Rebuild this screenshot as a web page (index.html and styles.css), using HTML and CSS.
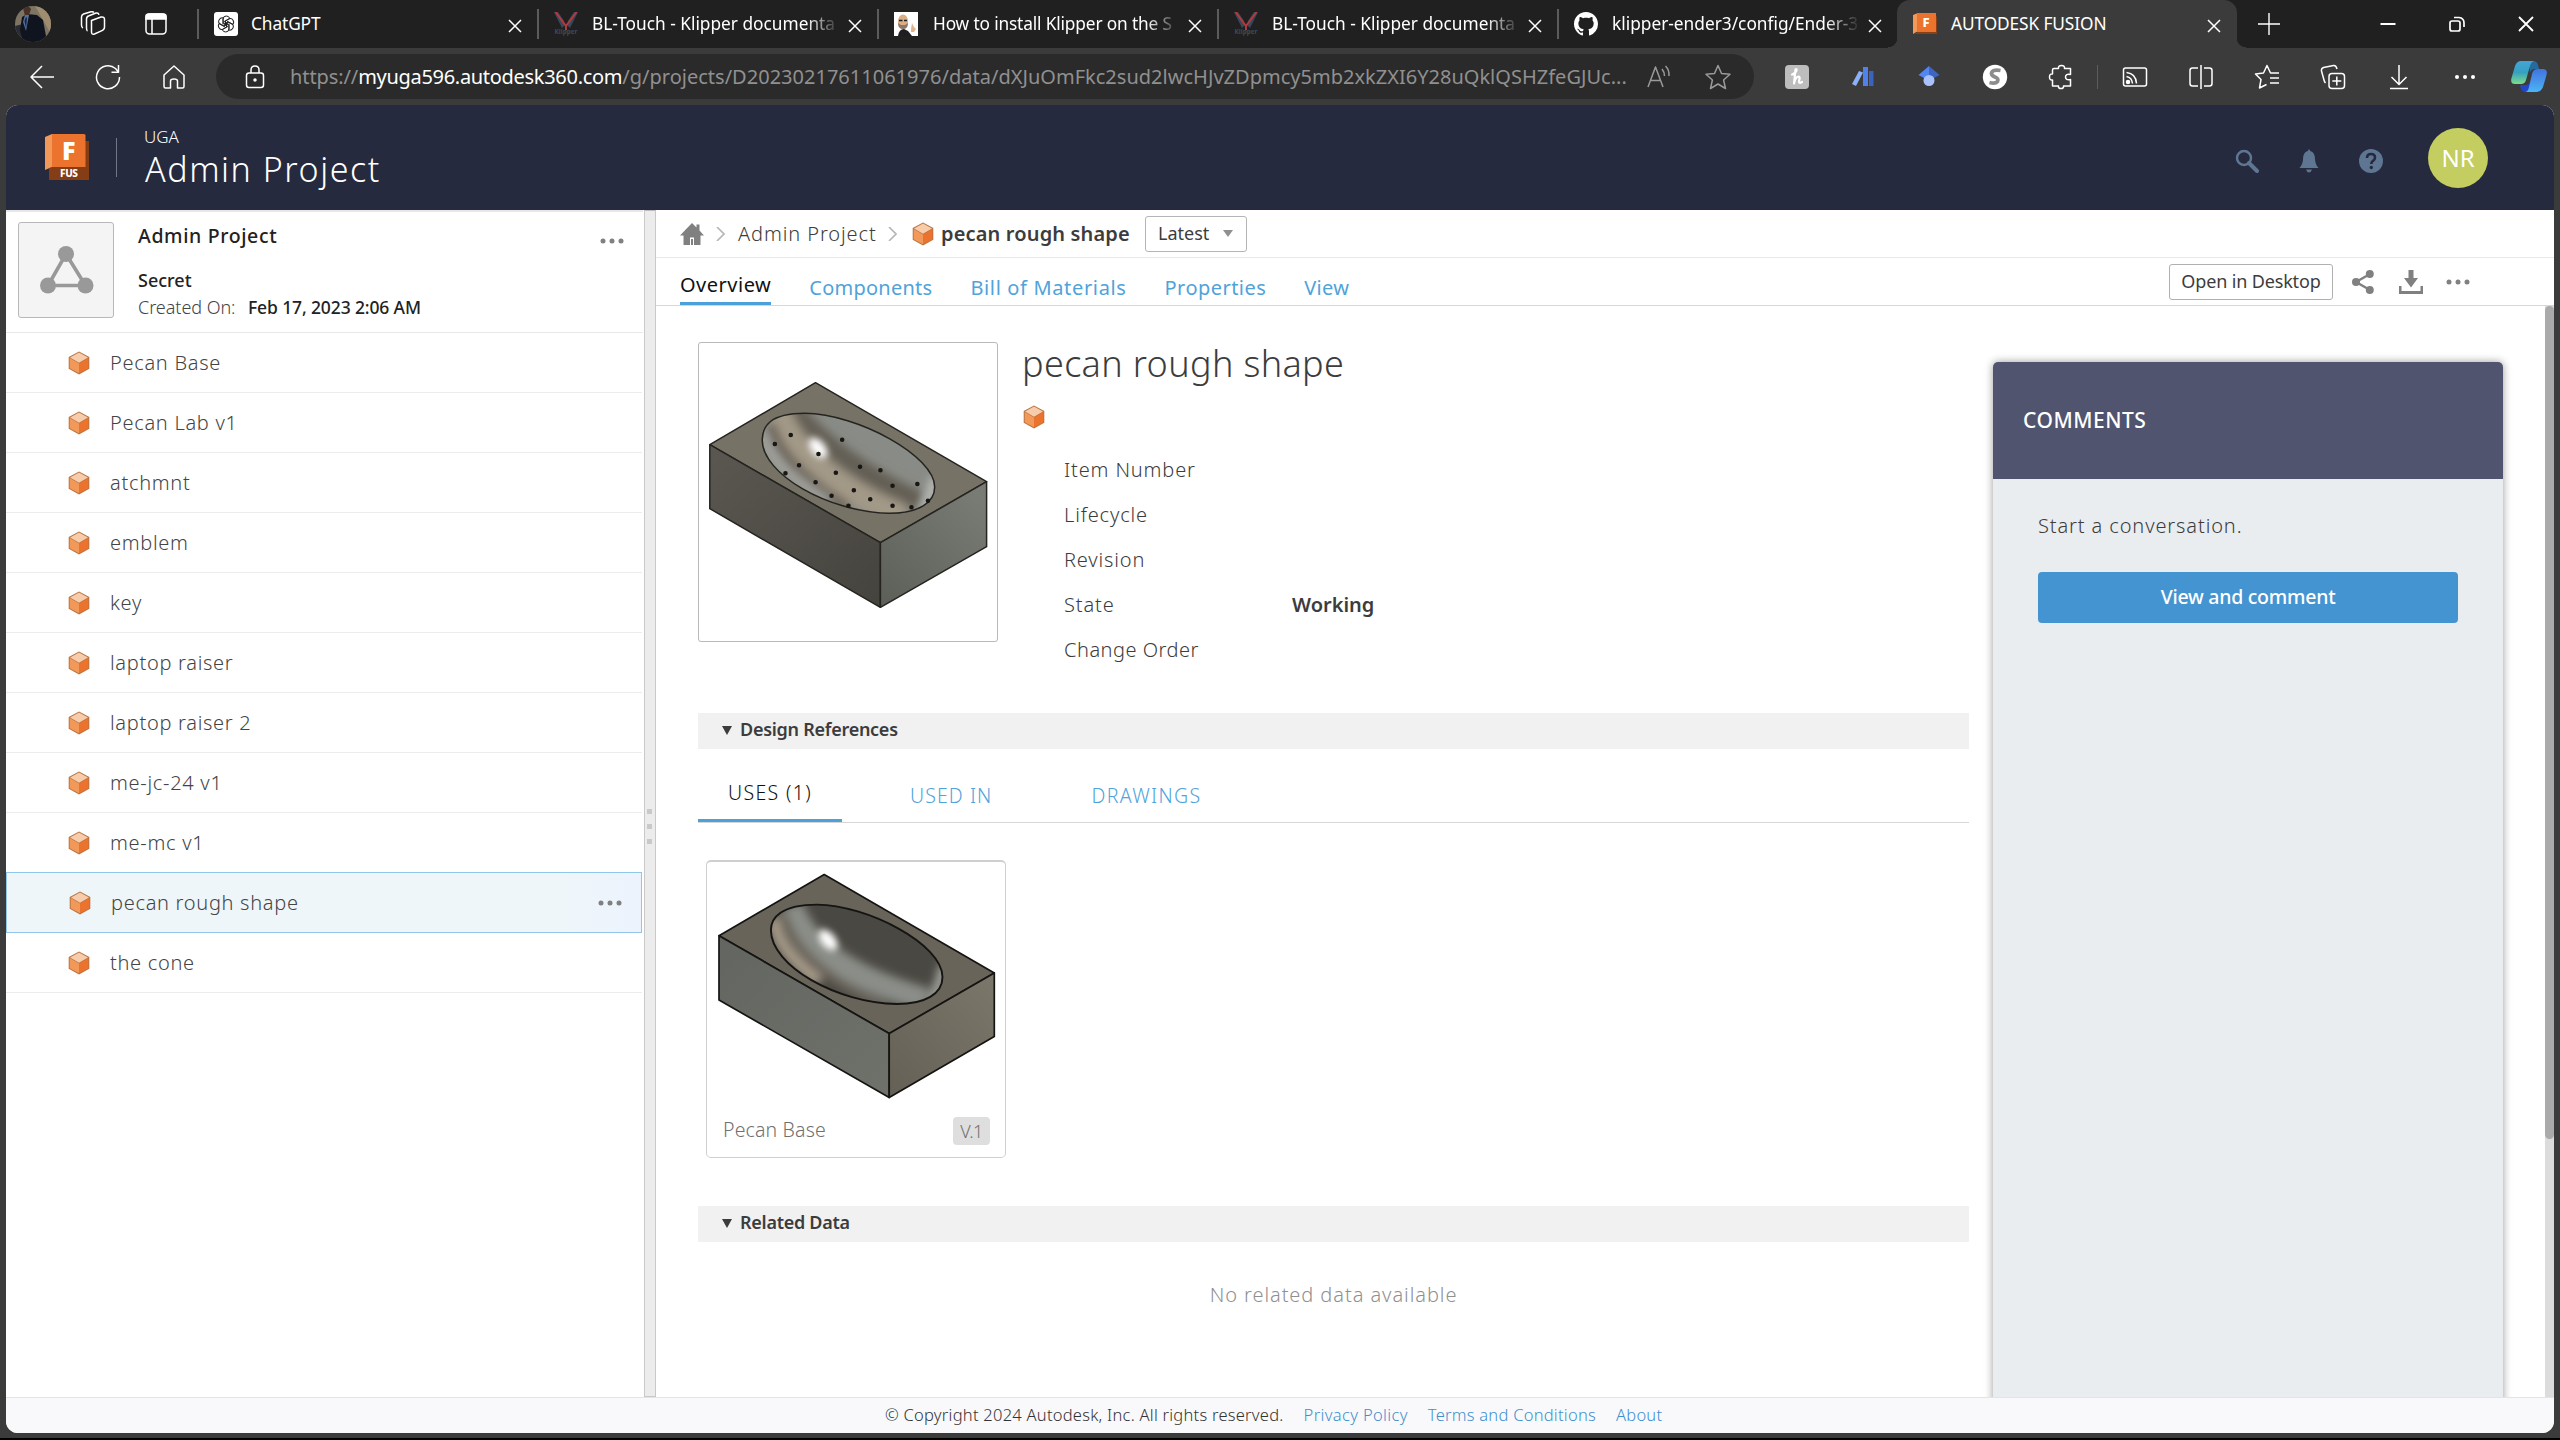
FILE: index.html
```html
<!DOCTYPE html>
<html lang="en">
<head>
<meta charset="utf-8">
<title>AUTODESK FUSION</title>
<link rel="stylesheet" href="styles.css">
</head>
<body>
<svg class="defs" aria-hidden="true">
  <symbol id="cube" viewBox="0 0 22 24">
    <path d="M11 .5 21.3 6v11.8L11 23.5.7 17.800V6z" fill="#b87442"/>
    <path d="M11 1.600 20 6.400 11 11.800 2 6.400z" fill="#f8cbaa"/>
    <path d="M1.700 7 11 12.500V22.300L1.700 17.200z" fill="#f2995a"/>
    <path d="M20.400 7 11 12.500V22.300L20.400 17.200z" fill="#ec732d"/>
  </symbol>
  <symbol id="close" viewBox="0 0 14 14"><path d="M1 1 13 13M13 1 1 13" stroke="currentColor" stroke-width="1.500" fill="none"/></symbol>
  <symbol id="dots" viewBox="0 0 24 6"><circle cx="3" cy="3" r="2.500"/><circle cx="12" cy="3" r="2.500"/><circle cx="21" cy="3" r="2.500"/></symbol>
  <symbol id="klipper" viewBox="0 0 24 24">
    <path d="M0 0H4L10 9V14L8 16z" fill="#34495e"/><path d="M24 0H20L14 9V14L16 16z" fill="#34495e"/>
    <path d="M1.500 0 12 14 22.500 0M12 13V18" stroke="#b5383a" stroke-width="2" fill="none"/>
    <text x="0.500" y="22" font-size="7" font-weight="700" fill="#3a4a60" textLength="23" lengthAdjust="spacingAndGlyphs">Klipper</text>
  </symbol>
</svg>

<div class="browser">
  <div class="tabstrip">
    <svg class="avatar" viewBox="0 0 36 36"><defs><clipPath id="av"><circle cx="18" cy="18" r="18"/></clipPath></defs><g clip-path="url(#av)"><path d="M0 0H36V36H0z" fill="#7e7464"/><path d="M20 0 36 4V28L28 14z" fill="#a08d70"/><path d="M0 20 8 18V36H0z" fill="#2a2c33"/><path d="M7 11 12 8 22 9 28 14 31 30 29 36H8L5 24z" fill="#10141f"/><path d="M8 2Q13-2 16 3L14 9 10 10z" fill="#493128"/><path d="M10 9 14 9 11 25 8 16z" fill="#54709c"/><path d="M11 11 12 12 11 22 9.500 15z" fill="#17244a"/></g></svg>
    <svg class="strip-icon workspaces" viewBox="0 0 26 26" fill="none" stroke="#fff" stroke-width="1.500"><path d="M11.500 9.500 21 6Q24.500 5.500 24.500 8.500V16Q24.500 18.500 22 19.600L14.500 23Q11.500 24 11.500 21z"/><path d="M7.500 20Q6.500 19.500 6.500 17V8Q6.500 5.500 9 4.800L16 2Q18.500 1.500 19 3.800"/><path d="M3 17Q1.500 16.500 1.500 14V6Q1.500 3.800 3.500 3L11 .8Q13 .5 14 1.500"/></svg>
    <svg class="strip-icon" viewBox="0 0 26 26" fill="none" stroke="#fff" stroke-width="1.500"><rect x="3" y="3" width="20" height="20" rx="3.500"/><path d="M3 8V5Q3 3 6 3H20Q23 3 23 5V8z" fill="#fff"/><path d="M9 8V23"/></svg>
    <div class="tabs">
      <div class="tab">
        <svg viewBox="0 0 24 24"><rect width="24" height="24" rx="3" fill="#fff"/><g fill="none" stroke="#222" stroke-width="1"><path id="petal" d="M9 12.500V7.500Q9 4 12.200 4 15 4 15.800 6.400L11.500 9V13.800"/><use href="#petal" transform="rotate(60 12 12)"/><use href="#petal" transform="rotate(120 12 12)"/><use href="#petal" transform="rotate(180 12 12)"/><use href="#petal" transform="rotate(240 12 12)"/><use href="#petal" transform="rotate(300 12 12)"/></g></svg>
        <span class="tab-title">ChatGPT</span><svg class="tab-close"><use href="#close"/></svg>
      </div>
      <div class="tab"><svg><use href="#klipper"/></svg><span class="tab-title faded">BL-Touch - Klipper documenta</span><svg class="tab-close"><use href="#close"/></svg></div>
      <div class="tab">
        <svg viewBox="0 0 24 24"><path d="M0 0H24V24H0z" fill="#fff"/><path d="M4 24Q5 17 10 17L14 19 18 24z" fill="#1d1d22"/><ellipse cx="9" cy="9.500" rx="5" ry="7" fill="#dcae85"/><path d="M4 11Q4 17 9 17 14 17 14 11L11 13H7z" fill="#8b7868"/><path d="M5 8.500H8.500M10 8.500H13" stroke="#222" stroke-width="1.500"/><path d="M17 17 18 11 20 15 22 17 20 20 17 20z" fill="#e2b48d"/></svg>
        <span class="tab-title faded">How to install Klipper on the S</span><svg class="tab-close"><use href="#close"/></svg>
      </div>
      <div class="tab"><svg><use href="#klipper"/></svg><span class="tab-title faded">BL-Touch - Klipper documenta</span><svg class="tab-close"><use href="#close"/></svg></div>
      <div class="tab">
        <svg viewBox="0 0 16 16" fill="#fff"><path d="M8 0C3.580 0 0 3.580 0 8c0 3.540 2.290 6.530 5.470 7.590.4.070.55-.17.55-.38 0-.19-.01-.82-.01-1.490-2.010.37-2.530-.49-2.690-.94-.09-.23-.48-.94-.82-1.130-.28-.15-.68-.52-.01-.53.63-.01 1.080.58 1.230.82.72 1.210 1.870.87 2.330.66.070-.52.28-.87.51-1.070-1.780-.2-3.640-.89-3.640-3.950 0-.87.31-1.590.82-2.150-.08-.2-.36-1.020.08-2.120 0 0 .67-.21 2.200.82.64-.18 1.320-.27 2-.27s1.360.09 2 .27c1.530-1.040 2.200-.82 2.200-.82.44 1.100.16 1.920.08 2.120.51.56.82 1.270.82 2.150 0 3.070-1.870 3.750-3.650 3.950.29.25.54.73.54 1.480 0 1.070-.01 1.930-.01 2.200 0 .21.15.46.55.38A8.010 8.010 0 0 0 16 8c0-4.420-3.580-8-8-8z"/></svg>
        <span class="tab-title faded">klipper-ender3/config/Ender-3</span><svg class="tab-close"><use href="#close"/></svg>
      </div>
      <div class="tab active">
        <svg viewBox="0 0 24 24"><path d="M2 22H24V4z" fill="#8a4017"/><path d="M0 3 5 1V19L0 22z" fill="#f2995a"/><path d="M4 1H23V20H4z" fill="#ec732d"/><text x="9.500" y="15" font-size="13" font-weight="800" fill="#fff">F</text></svg>
        <span class="tab-title">AUTODESK FUSION</span><svg class="tab-close"><use href="#close"/></svg>
      </div>
    </div>
    <svg class="new-tab" viewBox="0 0 22 22"><path d="M11 0V22M0 11H22" stroke="#fff" stroke-width="1.400"/></svg>
    <div class="window-controls">
      <svg viewBox="0 0 16 16"><path d="M.5 8H15.500" stroke="#fff" stroke-width="2"/></svg>
      <svg viewBox="0 0 16 16" fill="none" stroke="#fff" stroke-width="1.700"><rect x="1" y="5" width="10" height="10" rx="2"/><path d="M5 1.500H10Q15 2 15 7V11"/></svg>
      <svg viewBox="0 0 16 16"><path d="M1 1 15 15M15 1 1 15" stroke="#fff" stroke-width="1.800"/></svg>
    </div>
  </div>

  <div class="toolbar">
    <div class="tool"><svg viewBox="0 0 26 26"><path d="M25 13H2M13 2 2 13 13 24"/></svg></div>
    <div class="tool"><svg viewBox="0 0 26 26"><path d="M24.500 13A11.500 11.500 0 1 1 20.500 4.500L23.500 8M23.500 1V8.200H16.500"/></svg></div>
    <div class="tool"><svg viewBox="0 0 26 26"><path d="M3 11 13 2 23 11V22.500Q23 24 21.500 24H16.500V17Q16.500 15 13 15 9.500 15 9.500 17V24H4.500Q3 24 3 22.500z"/></svg></div>
    <div class="address">
      <svg viewBox="0 0 26 26"><rect x="4.500" y="9" width="17" height="14.500" rx="2.500"/><path d="M9 9V6Q9 2 13 2 17 2 17 6V9"/><circle cx="13" cy="16" r="1" fill="#fff"/></svg>
      <span class="url"><span>https://</span><b>myuga596.autodesk360.com</b><span>/g/projects/D20230217611061976/data/dXJuOmFkc2sud2lwcHJvZDpmcy5mb2xkZXI6Y28uQklQSHZfeGJUc...</span></span>
      <svg class="dim read" viewBox="0 0 26 26"><path d="M2 23 9.500 3 17 23M4.500 16.500H14.500M16 5Q18.500 8 18.500 12M19.500 2Q23.500 6 23 12"/></svg>
      <svg class="dim" viewBox="0 0 26 26"><path d="M13 1.500 16.500 9.500 25 10.300 18.600 16 20.500 24.500 13 20 5.500 24.500 7.400 16 1 10.300 9.500 9.500z"/></svg>
    </div>
    <div class="tool first"><svg class="solid" viewBox="0 0 26 26"><rect x="1" y="1" width="24" height="24" rx="4" fill="#bdbdbd"/><path d="M8 10.500Q11 10 12.500 6.500 13 4.500 11.500 5.500L10 19.500Q11.500 13 14.500 12.500 16.500 12.500 15 17 14.500 20 18 18" stroke="#fff" stroke-width="2.200" fill="none" stroke-linecap="round"/></svg></div>
    <div class="tool"><svg class="solid" viewBox="0 0 26 26"><path d="M2 20 9 7 13 8.500 6 22z" fill="#8db1f8"/><path d="M13 3H18V22H13z" fill="#4f82ea"/><path d="M19 7H23.500V22H19z" fill="#3a63c0"/></svg></div>
    <div class="tool"><svg class="solid" viewBox="0 0 26 26"><path d="M13 2 2.500 11 8 14H13z" fill="#5286f0"/><path d="M13 2 23.500 11 18 14H13z" fill="#3d66c4"/><circle cx="13" cy="16.500" r="5.500" fill="#a9c2fb"/></svg></div>
    <div class="tool"><svg class="solid" viewBox="0 0 26 26"><circle cx="13" cy="13" r="12.200" fill="#fff"/><path d="M18.500 6.500Q10 5 9.500 9.500 9.500 11.500 13 13 17 14.500 15.500 17.500 13.500 20 7.500 18.500" fill="none" stroke="#8c8c8c" stroke-width="3.800"/></svg></div>
    <div class="tool"><svg viewBox="0 0 26 26"><path d="M6 4.500H10.500Q10 1.500 13.500 1.500 17 1.500 16.500 4.500H22.500V10.500Q17.500 9.500 17.500 13 17.500 16.500 22.500 15.500V22H15.500Q16 24.500 13 24.500 10 24.500 10.500 22H4.500V16Q1.500 16.500 1.500 13 1.500 9.500 4.500 10V6Q4.500 4.500 6 4.500z"/></svg></div>
    <i class="tool-divider"></i>
    <div class="tool"><svg viewBox="0 0 26 26"><rect x="1.500" y="4" width="23" height="18" rx="2"/><path d="M4.500 8.500Q14 9.500 14.500 19.500M4.500 12.500Q10 13.500 10.500 19.500"/><circle cx="6" cy="18" r="1.500" fill="#fff"/></svg></div>
    <div class="tool"><svg viewBox="0 0 26 26"><path d="M13 1V25M10 4H4.500Q2 4 2 6.500V19.500Q2 22 4.500 22H10M16 4H21.500Q24 4 24 6.500V19.500Q24 22 21.500 22H16"/></svg></div>
    <div class="tool"><svg viewBox="0 0 26 26"><path d="M23.500 9H16.500L13 1.500 9.500 9 1.500 10 7 15.500 5.500 24 12.500 20.500M16.500 9H25M16 14H25M16 19H25"/></svg></div>
    <div class="tool"><svg viewBox="0 0 26 26"><rect x="9" y="9.500" width="15.500" height="15" rx="3"/><path d="M16.800 12.500V21.500M12.300 17H21.300M5.500 19Q4.500 18 4 16L1.500 7Q1 4.500 3.500 3.500L13.500 1.500Q16 1 17 5"/></svg></div>
    <div class="tool"><svg viewBox="0 0 26 26"><path d="M13 1V20M5.500 13 13 20.500 20.500 13M4 24.500H22"/></svg></div>
    <div class="tool"><svg class="solid" viewBox="0 0 26 26" fill="#fff"><circle cx="5" cy="13" r="2"/><circle cx="13" cy="13" r="2"/><circle cx="21" cy="13" r="2"/></svg></div>
    <div class="tool copilot">
      <svg viewBox="0 0 36 34"><defs><linearGradient id="cp1" x2="0" y2="1"><stop stop-color="#44a5d8"/><stop offset=".5" stop-color="#35a1c0"/><stop offset="1" stop-color="#7fdc8a"/></linearGradient><linearGradient id="cp2" x2="0" y2="1"><stop stop-color="#4272e0"/><stop offset="1" stop-color="#4cb5f5"/></linearGradient></defs><path d="M18 1H22Q26 1 27 5L28 9H24Q20 9 19 13z" fill="#266b9d"/><path d="M10 1H23Q20 2 19 6L15 20Q14 24 10 24H4Q-1 24 .5 18L4 6Q6 1 10 1z" fill="url(#cp1)"/><path d="M9 25H15Q18 25 19 21L18 32H14Q10 32 9 25z" fill="#2246c8"/><path d="M27 9H32Q37 9 35.500 15L32 27Q30 32 26 32H14Q17 32 18 27L21 14Q22 9 27 9z" fill="url(#cp2)"/></svg>
    </div>
  </div>

  <div class="page">
    <header class="app-header">
      <svg class="logo" viewBox="0 0 44 46"><path d="M4 7H44V46H4z" fill="#843d15"/><path d="M0 3 7 0V33L0 36z" fill="#f2995a"/><path d="M7 0H39Q40.500 0 40.500 1.500V33H7z" fill="#ec732d"/><path d="M4 34 9 33H44V46H5Q4 46 4 45z" fill="#843d15"/><text x="17" y="26" font-size="25" font-weight="900" fill="#fff">F</text><text x="15" y="42.500" font-size="10" font-weight="800" fill="#fff" textLength="18">FUS</text></svg>
      <div class="project-title"><span class="hub">UGA</span><span class="name">Admin Project</span></div>
      <div class="header-actions">
        <svg viewBox="0 0 24 24"><circle cx="9" cy="9" r="7" fill="none" stroke="currentColor" stroke-width="2.500"/><path d="M14 14 22 22" stroke="currentColor" stroke-width="4" stroke-linecap="round"/></svg>
        <svg viewBox="0 0 24 24" fill="currentColor"><path d="M12 0 13.300 2Q18 3.500 18 10 18 15 21.500 19H2.500Q6 15 6 10 6 3.500 10.700 2zM9 20.500H15Q14 23.500 12 23.500 10 23.500 9 20.500z"/></svg>
        <svg viewBox="0 0 24 24"><circle cx="12" cy="12" r="12" fill="currentColor"/><path d="M8 9Q8 5 12 5 16 5 16 8.500 16 10.500 14 11.800 12.300 13 12.300 15" fill="none" stroke="#252a3e" stroke-width="2.600"/><circle cx="12.300" cy="18.500" r="1.700" fill="#252a3e"/></svg>
        <span class="user">NR</span>
      </div>
    </header>

    <div class="workspace">
      <aside class="sidebar">
        <div class="project">
          <div class="project-thumb"><svg viewBox="0 0 54 48"><path d="M26 8 8 39.500H45.500z" fill="none" stroke="#999" stroke-width="3.600"/><g fill="#999"><circle cx="26" cy="8" r="8"/><circle cx="8" cy="39.500" r="8"/><circle cx="45.500" cy="39.500" r="8"/></g></svg></div>
          <div class="project-info"><span class="p-name">Admin Project</span><span class="p-type">Secret</span><span class="p-date"><i>Created On:</i><b>Feb 17, 2023 2:06 AM</b></span></div>
          <svg class="more"><use href="#dots"/></svg>
        </div>
        <ul class="files">
          <li><svg class="cube"><use href="#cube"/></svg>Pecan Base</li>
          <li><svg class="cube"><use href="#cube"/></svg>Pecan Lab v1</li>
          <li><svg class="cube"><use href="#cube"/></svg>atchmnt</li>
          <li><svg class="cube"><use href="#cube"/></svg>emblem</li>
          <li><svg class="cube"><use href="#cube"/></svg>key</li>
          <li><svg class="cube"><use href="#cube"/></svg>laptop raiser</li>
          <li><svg class="cube"><use href="#cube"/></svg>laptop raiser 2</li>
          <li><svg class="cube"><use href="#cube"/></svg>me-jc-24 v1</li>
          <li><svg class="cube"><use href="#cube"/></svg>me-mc v1</li>
          <li class="selected"><svg class="cube"><use href="#cube"/></svg>pecan rough shape<svg class="more"><use href="#dots"/></svg></li>
          <li><svg class="cube"><use href="#cube"/></svg>the cone</li>
        </ul>
      </aside>
      <div class="splitter"><i></i><i></i><i></i></div>

      <main class="main">
        <nav class="breadcrumbs">
          <svg class="home" viewBox="0 0 24 22" fill="#808080"><path d="M12 0 16.500 4.500V1.500H19.500V7.500L24 12.500H20.500V22H14V14.500H10V22H3.500V12.500H0z"/><path d="M11 16H13V22H11z"/></svg>
          <svg class="chev" viewBox="0 0 9 14"><path d="M1 0 8 7 1 14"/></svg>
          <span class="crumb">Admin Project</span>
          <svg class="chev" viewBox="0 0 9 14"><path d="M1 0 8 7 1 14"/></svg>
          <svg class="cube"><use href="#cube"/></svg>
          <span class="current">pecan rough shape</span>
          <span class="version">Latest<i class="caret"></i></span>
        </nav>
        <div class="view-bar">
          <div class="view-tabs"><span class="on">Overview</span><span>Components</span><span>Bill of Materials</span><span>Properties</span><span>View</span></div>
          <span class="open-desktop">Open in Desktop</span>
          <svg class="act share" viewBox="0 0 22 24"><path d="M18 4 4 12 18 20" stroke="#808080" stroke-width="2.400" fill="none"/><g fill="#808080"><circle cx="17.800" cy="4" r="4"/><circle cx="4" cy="12" r="4"/><circle cx="17.800" cy="20" r="4"/></g></svg>
          <svg class="act download" viewBox="0 0 24 24" fill="#808080"><path d="M9.500 0H14.500V8H19L12 17.500 5 8H9.500zM0 16H2.500V21H21.500V16H24V24H0z"/></svg>
          <svg class="more"><use href="#dots"/></svg>
        </div>

        <div class="scroll">
          <div class="content">
            <section class="summary">
              <div class="model">
                <svg viewBox="0 0 300 300">
                  <defs>
                    <clipPath id="bowlA"><path id="rimA" d="M64.200 98C64.500 85 71 71.300 107 71.300 160 72 236.700 114 236.700 145 236.700 161 220 171.300 191 171.300 130 170 64.200 132 64.200 98z"/></clipPath>
                    <filter id="blurA" x="-50%" y="-50%" width="200%" height="200%"><feGaussianBlur stdDeviation="5"/></filter>
                    <filter id="glow" x="-100%" y="-100%" width="300%" height="300%"><feGaussianBlur stdDeviation="3.500"/></filter>
                    <linearGradient id="sideA" x1="0" y1="0" x2="1" y2="1"><stop stop-color="#5a5851"/><stop offset="1" stop-color="#45433d"/></linearGradient>
                    <linearGradient id="faceA" x1=".8" y1="0" x2="0" y2="1"><stop stop-color="#797b75"/><stop offset="1" stop-color="#5c5e58"/></linearGradient>
                  </defs>
                  <g stroke="#25231f" stroke-width="1.500" stroke-linejoin="round"><path d="M117.500 40.700 288.600 139.700 182.400 200.700 11.800 102.700z" fill="#777266"/><path d="M11.800 102.700 182.400 200.700V265.300L11.800 166.700z" fill="url(#sideA)"/><path d="M182.400 200.700 288.600 139.700V204.700L182.400 265.300z" fill="url(#faceA)"/></g>
                  <g clip-path="url(#bowlA)"><path d="M50 60H250V180H50z" fill="#898c86"/><g filter="url(#blurA)" fill="none"><path d="M95 68Q140 122 222 160" stroke="#635e55" stroke-width="20"/><path d="M80 70Q108 134 205 174" stroke="#a39987" stroke-width="24"/><path d="M73 82Q80 120 150 166" stroke="#686157" stroke-width="10"/><path d="M65 90Q68 120 130 160" stroke="#a5a5a0" stroke-width="9"/><path d="M238 135 225 172" stroke="#c1c4c0" stroke-width="8"/></g><ellipse cx="120" cy="106" rx="12" ry="7" fill="#fff" filter="url(#glow)" transform="rotate(50 120 106)"/></g>
                  <use href="#rimA" fill="none" stroke="#24231f" stroke-width="1.500"/>
                  <path class="holes" d="M92.700 93h.1M76.800 102h.1M144.100 97.700h.1M120.400 112h.1M101 123.300h.1M87.400 131.300h.1M137.800 130.700h.1M162 124.700h.1M182.400 128.300h.1M117.500 140.300h.1M155.800 148.300h.1M194.500 143.700h.1M219.300 142h.1M133.500 153.700h.1M172.200 157.300h.1M150.400 163.700h.1M194.500 163.700h.1M213.400 165.300h.1M229.900 158.700h.1"/>
                </svg>
              </div>
              <div class="details">
                <h1>pecan rough shape</h1>
                <svg class="cube"><use href="#cube"/></svg>
                <dl><dt>Item Number</dt><dd></dd><dt>Lifecycle</dt><dd></dd><dt>Revision</dt><dd></dd><dt>State</dt><dd>Working</dd><dt>Change Order</dt><dd></dd></dl>
              </div>
            </section>

            <h2 class="section-bar"><i class="caret dark"></i>Design References</h2>
            <div class="ref-tabs"><span class="on">USES (1)</span><span>USED IN</span><span>DRAWINGS</span></div>
            <div class="card">
              <svg viewBox="0 0 298 250">
                <defs>
                  <clipPath id="bowlB"><path id="rimB" d="M63.900 70C64 58 74 44.600 110 44.600 160 45 235.500 84 235.500 117 235.500 134 218 144 190 144 130 143 63.900 106 63.900 70z"/></clipPath>
                  <linearGradient id="sideB" x2="1" y2="1"><stop stop-color="#636560"/><stop offset="1" stop-color="#6f716b"/></linearGradient>
                  <linearGradient id="faceB" x1="1" y1="0" x2="0" y2="1"><stop stop-color="#7c776b"/><stop offset="1" stop-color="#646055"/></linearGradient>
                </defs>
                <g stroke="#151412" stroke-width="1.700" stroke-linejoin="round"><path d="M117.200 14.600 287.300 112.900 182.200 173.600 12 75.700z" fill="#68645a"/><path d="M12 75.700 182.200 173.600V237.500L12 140z" fill="url(#sideB)"/><path d="M182.200 173.600 287.300 112.900V176.400L182.200 237.500z" fill="url(#faceB)"/></g>
                <g clip-path="url(#bowlB)"><path d="M50 30H250V160H50z" fill="#4a4842"/><g filter="url(#blurA)" fill="none"><path d="M84 46Q106 108 220 140" stroke="#8b8e88" stroke-width="24"/><path d="M76 54Q88 106 180 148" stroke="#69635a" stroke-width="10"/><path d="M66 58Q68 88 112 122" stroke="#a99d8b" stroke-width="12"/><path d="M238 104 226 144" stroke="#b5b8b3" stroke-width="8"/></g><ellipse cx="121" cy="80" rx="12" ry="7" fill="#fff" filter="url(#glow)" transform="rotate(50 121 80)"/></g>
                <use href="#rimB" fill="none" stroke="#151412" stroke-width="1.900"/>
              </svg>
              <div class="card-foot"><span>Pecan Base</span><span class="badge">V.1</span></div>
            </div>
            <h2 class="section-bar related"><i class="caret dark"></i>Related Data</h2>
            <p class="empty">No related data available</p>
          </div>
          <aside class="comments">
            <h3>COMMENTS</h3>
            <p>Start a conversation.</p>
            <span class="view-comment">View and comment</span>
          </aside>
          <div class="scrollbar"><i></i></div>
        </div>
      </main>
    </div>
    <footer class="footer"><span>© Copyright 2024 Autodesk, Inc. All rights reserved.</span><a>Privacy Policy</a><a>Terms and Conditions</a><a>About</a></footer>
  </div>
</div>
</body>
</html>
```
FILE: styles.css
```css
* { box-sizing: border-box; }
body { margin: 0; background: #000; font-family: "Noto Sans", "Open Sans", sans-serif; color: #3c3c3c; overflow: hidden; }
i, b { font-style: normal; font-weight: inherit; }
h1, h2, h3, p, ul, dl, dd { margin: 0; padding: 0; }
svg { display: block; flex: none; }
.defs { position: absolute; width: 0; height: 0; }
.browser { width: 2560px; height: 1438px; background: #3b3b3b; display: flex; flex-direction: column; white-space: nowrap; }

/* tab strip */
.tabstrip { height: 48px; background: #202020; display: flex; align-items: center; padding-left: 15px; }
.avatar { width: 36px; height: 36px; }
.strip-icon { width: 26px; height: 26px; margin-right: 28px; }
.workspaces { margin: 0 37px 0 29px; }
.tabs { display: flex; height: 48px; align-items: center; }
.tab { width: 340px; height: 30px; border-left: 2px solid #5c5c5c; display: grid; grid-template-columns: 24px 270px 14px; align-items: center; padding-left: 15px; color: #fff; font-size: 17.3px; }
.tab > svg { width: 24px; height: 24px; }
.tab > svg.tab-close { width: 14px; height: 14px; margin-top: 3px; }
.tab-title { line-height: 28px; padding-left: 14px; letter-spacing: -.1px; }
.tab:first-child .tab-title { padding-left: 13px; }
.faded { letter-spacing: 0; -webkit-mask-image: linear-gradient(90deg, #000 228px, transparent 262px); mask-image: linear-gradient(90deg, #000 228px, transparent 262px); }
.tab:nth-child(3) .faded { letter-spacing: -.15px; padding-left: 15px; }
.tab.active { height: 48px; background: #3b3b3b; border: 0; border-radius: 13px 13px 0 0; padding-left: 16px; position: relative; }
.tab.active .tab-title { padding-left: 14px; }
.tab.active::before, .tab.active::after { content: ""; position: absolute; bottom: 0; width: 9px; height: 10px; }
.tab.active::before { left: -9px; background: radial-gradient(circle at 0 0, transparent 9px, #3b3b3b 9.500px); }
.tab.active::after { right: -9px; background: radial-gradient(circle at 100% 0, transparent 9px, #3b3b3b 9.500px); }
.new-tab { width: 22px; height: 22px; margin-left: 21px; }
.window-controls { margin-left: auto; display: flex; gap: 53px; padding-right: 26px; }
.window-controls svg { width: 16px; height: 16px; }

/* toolbar */
.toolbar { height: 57px; display: flex; align-items: center; padding-left: 9px; }
.tool { width: 66px; display: flex; justify-content: center; flex: none; }
.tool svg, .address svg { width: 26px; height: 26px; fill: none; stroke: #fff; stroke-width: 1.500; stroke-linejoin: round; }
.tool svg.solid { stroke: none; }
.tool svg.solid[fill] { fill: #fff; }
.tool.first { margin-left: 10px; }
.tool-divider { width: 2px; height: 24px; background: #5c5c5c; margin: 0 4px 0 3px; }
.tool.copilot { width: 62px; }
.tool.copilot svg { width: 36px; height: 34px; stroke: none; }
.address { width: 1538px; height: 45px; margin-left: 9px; border-radius: 23px; background: #2a2a2a; display: flex; align-items: center; padding: 0 23px 0 26px; flex: none; }
.url { width: 1353px; margin-left: 22px; font-size: 20px; color: #909090; }
.url b { color: #fff; letter-spacing: -.3px; }
.url span:first-child { letter-spacing: -.1px; }
.url span:last-child { letter-spacing: .015px; }
.address svg.dim { stroke: #9a9a9a; }
.address svg.read { margin: 0 33px 0 auto; }

/* page */
.page { width: 2548px; height: 1328px; margin-left: 6px; border-radius: 12px; overflow: hidden; background: #fff; display: flex; flex-direction: column; }
.app-header { height: 105px; flex: none; background: #252a3e; color: #fff; display: flex; padding: 0 66px 0 39px; }
.logo { width: 44px; height: 46px; margin-top: 29px; }
.project-title { height: 39px; margin: 33px 0 0 27px; border-left: 1px solid #747785; padding-left: 28px; display: flex; flex-direction: column; }
.hub { font-size: 17px; line-height: 20px; font-weight: 300; margin: -11px 0 0 -1px; height: 20px; }
.name { font-size: 34px; line-height: 40px; font-weight: 300; letter-spacing: 1.550px; margin-top: 2px; }
.header-actions { margin-left: auto; display: flex; color: #5f7693; }
.header-actions svg { width: 24px; height: 24px; margin: 44px 38px 0 0; }
.header-actions svg:nth-child(3) { margin-right: 45px; }
.user { width: 60px; height: 60px; margin-top: 23px; border-radius: 50%; background: #c3cd60; color: #fff; font-size: 24px; line-height: 60px; text-align: center; }
.workspace { flex: 1; display: flex; min-height: 0; }

/* sidebar */
.sidebar { width: 638px; padding-right: 1px; }
.project { height: 123px; display: flex; border-bottom: 1px solid #e9e9e9; padding: 12px 19px 0 12px; box-shadow: inset 0 2px 1px #e6e6e6; }
.project-thumb { width: 96px; height: 96px; border: 1px solid #b8b8b8; border-radius: 3px; background: #f4f4f4; padding: 23px 0 0 21px; }
.project-thumb svg { width: 54px; height: 48px; }
.project-info { margin-left: 24px; display: flex; flex-direction: column; color: #222; }
.p-name { font-size: 19.5px; font-weight: 500; letter-spacing: .63px; line-height: 28px; }
.p-type { font-size: 18px; font-weight: 500; line-height: 27px; margin-top: 17px; }
.p-date { display: flex; font-size: 18px; line-height: 27px; }
.p-date i { font-weight: 300; width: 110px; color: #444; letter-spacing: -.05px; }
.p-date b { font-weight: 500; font-size: 17.500px; letter-spacing: -.13px; }
.more { width: 24px; height: 6px; fill: #808080; margin-left: auto; }
.project .more { margin-top: 16px; }
.files { list-style: none; }
.files li { height: 60px; width: 636px; border-bottom: 1px solid #ececec; display: flex; align-items: center; padding: 0 20px 1px 62px; font-size: 20px; font-weight: 350; letter-spacing: .7px; color: #444; }
.cube { width: 22px; height: 24px; }
.files .cube { margin: 2px 20px 0 0; }
.files .selected { border: 1px solid #92c5ea; background: linear-gradient(90deg, #eef6fa 88%, #ecf3fd); padding: 0 19px 0 62px; height: 61px; margin-top: -1px; }
.files .selected .cube { margin-top: 0; }
.splitter { width: 12px; background: #ececec; border: 1px solid #c9c9c9; border-top-color: #bbb; padding: 598px 0 0 2px; display: flex; flex-direction: column; gap: 10px; flex: none; }
.splitter i { width: 5px; height: 5px; background: #c9c9c9; flex: none; }

/* main */
.main { flex: 1; display: flex; flex-direction: column; min-width: 0; }
.breadcrumbs { height: 48px; border-bottom: 1px solid #e9e9e9; display: flex; align-items: center; padding-left: 24px; font-size: 20px; flex: none; }
.home { width: 24px; height: 22px; }
.chev { width: 9px; height: 14px; fill: none; stroke: #b5b5b5; stroke-width: 1.600; margin: 0 13px 0 12px; }
.crumb { width: 138px; font-weight: 350; letter-spacing: .9px; }
.breadcrumbs .cube { margin: 0 7px 0 2px; }
.current { font-weight: 600; width: 204px; letter-spacing: .15px; }
.version { width: 102px; height: 36px; border: 1px solid #b5b5b5; border-radius: 3px; font-size: 18px; line-height: 33px; padding: 0 12px; display: flex; justify-content: space-between; align-items: center; }
.caret { border: 5px solid transparent; border-top: 7px solid #909090; border-bottom: 0; margin-right: 1px; }
.caret.dark { border-top: 9px solid #3c3c3c; margin: 3px 8px 0 24px; border-left-width: 5px; border-right-width: 5px; }
.view-bar { height: 48px; border-bottom: 1px solid #d6d6d6; display: flex; align-items: center; padding: 0 84px 0 24px; flex: none; }
.view-tabs { display: flex; height: 47px; font-size: 20px; gap: 38px; color: #4fa3da; line-height: 60px; }
.view-tabs span:nth-child(2) { letter-spacing: .25px; }
.view-tabs span:nth-child(3) { letter-spacing: .65px; }
.view-tabs span:nth-child(4) { letter-spacing: .45px; }
.view-tabs span:nth-child(5) { letter-spacing: .3px; }
.view-tabs .on { color: #111; border-bottom: 3px solid #4ba2da; line-height: 54px; letter-spacing: .5px; }
.open-desktop { width: 164px; height: 36px; margin-left: auto; border: 1px solid #b0b0b0; border-radius: 3px; font-size: 18px; line-height: 32px; text-align: center; letter-spacing: -.15px; }
.act.share { width: 22px; height: 24px; margin: 0 25px 0 19px; }
.act.download { width: 24px; height: 24px; margin-right: 23px; }
.view-bar .more { margin: 1px 0 0; }
.scroll { flex: 1; display: flex; min-height: 0; overflow: hidden; }
.content { width: 1271px; margin: 36px 24px 0 42px; flex: none; }
.summary { display: flex; height: 371px; }
.model { width: 300px; height: 300px; border: 1px solid #b9b9b9; border-radius: 3px; }
.model svg { width: 300px; height: 300px; margin: -1px; }
.holes { fill: none; stroke: #181714; stroke-width: 4.500; stroke-linecap: round; }
.details { margin-left: 24px; }
h1 { font-size: 36px; font-weight: 300; line-height: 50px; letter-spacing: .35px; margin-top: -3px; }
.details > .cube { margin: 16px 0 0 1px; }
dl { display: grid; grid-template-columns: 228px auto; margin: 18px 0 0 42px; font-size: 20px; line-height: 45px; letter-spacing: .85px; }
dt { font-weight: 350; }
dt:last-of-type { letter-spacing: .5px; }
dd { font-weight: 600; letter-spacing: 0; height: 45px; }
.section-bar { height: 36px; background: #f1f1f1; font-size: 18px; font-weight: 600; letter-spacing: -.27px; display: flex; align-items: center; padding-bottom: 4px; }
.ref-tabs { height: 74px; border-bottom: 1px solid #d6d6d6; display: flex; font-size: 19.5px; font-weight: 350; letter-spacing: 1.350px; color: #4fa3da; line-height: 93px; }
.ref-tabs span { height: 73px; }
.ref-tabs .on { width: 144px; padding-left: 30px; color: #111; border-bottom: 3px solid #4ba2da; line-height: 87px; }
.ref-tabs span:nth-child(2) { letter-spacing: 1.100px; margin: 0 99px 0 68px; }
.card { width: 300px; height: 298px; margin: 37px 0 0 8px; border: 1px solid #cfcfcf; border-top-width: 2px; border-radius: 5px; }
.card > svg { width: 298px; height: 250px; margin-top: -2px; }
.card-foot { display: flex; justify-content: space-between; align-items: center; padding: 0 15px 0 16px; height: 40px; font-size: 19.5px; font-weight: 350; color: #707070; }
.card-foot span:first-child { padding-bottom: 1px; letter-spacing: .15px; }
.badge { width: 37px; height: 28px; margin-top: 1px; border-radius: 4px; background: #dedede; text-align: center; font-size: 18px; line-height: 29px; letter-spacing: -.5px; }
.section-bar.related { margin-top: 48px; }
.empty { text-align: center; font-size: 20px; font-weight: 300; letter-spacing: .93px; color: #909090; line-height: 28px; margin-top: 39px; }

.comments { width: 510px; height: 1100px; margin-top: 56px; background: #e9edf0; box-shadow: 0 0 8px rgba(0,0,0,.4); border-radius: 5px 5px 0 0; display: flex; flex-direction: column; flex: none; }
.comments h3 { height: 117px; background: #50546e; color: #fff; font-size: 21px; font-weight: 550; letter-spacing: .5px; line-height: 116px; padding-left: 30px; border-radius: 5px 5px 0 0; }
.comments p { margin: 33px 0 0 45px; line-height: 28px; font-size: 20px; font-weight: 300; letter-spacing: .88px; }
.view-comment { width: 420px; height: 51px; margin: 32px 0 0 45px; border-radius: 4px; background: #4494d2; color: #fff; text-align: center; line-height: 50px; font-size: 19.5px; font-weight: 500; letter-spacing: -.25px; }
.scrollbar { width: 9px; margin-left: auto; background: #dcdcdc; }
.scrollbar i { display: block; height: 833px; background: #aaa; border-radius: 5px; }

.footer { height: 36px; flex: none; border-top: 1px solid #e4e4e8; background: #f9f9fb; display: flex; padding-left: 879px; gap: 20px; font-size: 16.5px; font-weight: 300; letter-spacing: .25px; line-height: 33px; color: #333; }
.footer a { color: #3f8fd0; }
.footer a:nth-child(2) { letter-spacing: .35px; }
```
